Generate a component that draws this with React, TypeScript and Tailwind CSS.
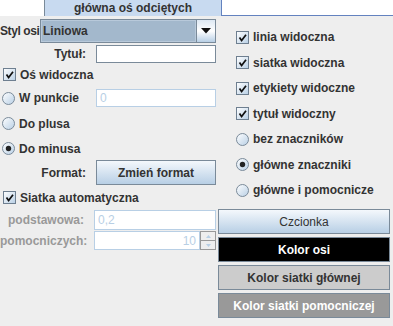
import { useId } from "react";

function CheckBox() {
  const id = useId();
  return (
    <svg width="13" height="13" viewBox="0 0 13 13" className="shrink-0">
      <defs>
        <linearGradient id={id} x1="0" y1="0" x2="1" y2="1">
          <stop offset="0" stopColor="#ffffff" />
          <stop offset="1" stopColor="#b8cfe5" />
        </linearGradient>
      </defs>
      <rect x="0.5" y="0.5" width="12" height="12" fill={`url(#${id})`} stroke="#6e7f90" />
      <path d="M3.5 6.5 L5.6 9.6 L10 3.8" stroke="#111" strokeWidth="1.7" fill="none" />
    </svg>
  );
}

function Radio({ on }: { on?: boolean }) {
  const id = useId();
  return (
    <svg width="13" height="13" viewBox="0 0 13 13" className="shrink-0">
      <defs>
        <linearGradient id={id} x1="0" y1="0" x2="1" y2="1">
          <stop offset="0" stopColor="#ffffff" />
          <stop offset="1" stopColor="#b8cfe5" />
        </linearGradient>
      </defs>
      <circle cx="6.5" cy="6.5" r="6" fill={`url(#${id})`} stroke="#7a8a99" />
      {on && <circle cx="6.5" cy="6.5" r="2.7" fill="#222" />}
    </svg>
  );
}

function Check({ label }: { label: string }) {
  return (
    <div className="flex items-center gap-[4px]">
      <CheckBox />
      <span>{label}</span>
    </div>
  );
}

function Opt({ label, on }: { label: string; on?: boolean }) {
  return (
    <div className="flex items-center gap-[4px]">
      <Radio on={on} />
      <span>{label}</span>
    </div>
  );
}

export default function App() {
  return (
    <div className="w-[393px] h-[326px] overflow-hidden bg-[#eeeeee] text-[12px] font-bold leading-[14px] text-[#333333] font-['Liberation_Sans',Arial,sans-serif]">
      {/* zakładki */}
      <div className="flex h-4">
        <div className="w-[45px] bg-white border-r border-[#7a8a99]" />
        <div className="w-[176px] bg-[#c8daf0] flex items-center justify-center">główna oś odciętych</div>
        <div className="flex-1 bg-white border-l border-b border-[#6382bf]" />
      </div>

      <div className="flex">
        {/* lewa kolumna */}
        <div className="w-[216px] flex flex-col">
          <div className="mt-[3px] h-[24px] flex items-center">
            <span className="w-[40px] shrink-0 whitespace-nowrap tracking-[-0.4px]">Styl osi</span>
            <div className="w-[176px] h-full flex border border-[#7a8a99]">
              <div className="flex-1 bg-[#a3b8cc] border border-[#b8c9da] flex items-center pl-[1px]">Liniowa</div>
              <div className="w-[19px] border-l border-[#7a8a99] bg-gradient-to-b from-[#dde8f3] via-white to-[#b8cfe5] flex items-center justify-center">
                <svg width="10" height="6" viewBox="0 0 10 6">
                  <path d="M0 0 H10 L5 5.5 Z" fill="#111" />
                </svg>
              </div>
            </div>
          </div>

          <div className="mt-[2px] h-[18px] flex items-center">
            <span className="w-[86px] text-right">Tytuł:</span>
            <div className="ml-[10px] w-[120px] h-full bg-white border border-[#7a8a99]" />
          </div>

          <div className="h-[23px] flex items-center pl-[3px]">
            <Check label="Oś widoczna" />
          </div>

          <div className="h-[24px] flex items-center">
            <div className="w-[96px] pl-[2px]">
              <Opt label="W punkcie" />
            </div>
            <div className="w-[120px] h-[18px] bg-white border border-[#b8cfe5] flex items-center pl-[3px] font-normal text-[#b8cfe5]">0</div>
          </div>

          <div className="h-[27px] flex items-center pl-[2px]">
            <Opt label="Do plusa" />
          </div>

          <div className="h-[23px] flex items-center pl-[2px]">
            <Opt label="Do minusa" on />
          </div>

          <div className="h-[25px] flex items-center">
            <span className="w-[86px] text-right">Format:</span>
            <div className="ml-[10px] w-[120px] h-full border border-[#7a8a99] bg-gradient-to-b from-[#f4f8fc] to-[#b8cfe5] flex items-center justify-center">
              Zmień format
            </div>
          </div>

          <div className="h-[25px] flex items-center pl-[3px]">
            <Check label="Siatka automatyczna" />
          </div>

          <div className="h-[20px] flex items-center">
            <span className="w-[84px] text-right text-[#999999] whitespace-nowrap">podstawowa:</span>
            <div className="ml-[10px] w-[122px] h-full bg-white border border-[#b8cfe5] flex items-center pl-[3px] font-normal text-[#b8cfe5]">0,2</div>
          </div>

          <div className="mt-[1px] h-[19px] flex items-center">
            <span className="w-[84px] text-right text-[#999999] whitespace-nowrap">pomocniczych:</span>
            <div className="ml-[10px] w-[106px] h-full bg-white border border-[#b8cfe5] flex items-center justify-end pr-[3px] font-normal text-[#b8cfe5]">10</div>
            <div className="w-[16px] h-full flex flex-col">
              <div className="flex-1 border border-[#999999] bg-[#eeeeee] flex items-center justify-center">
                <svg width="5" height="3" viewBox="0 0 5 3"><path d="M0 3 L2.5 0 L5 3 Z" fill="#b8cfe5" /></svg>
              </div>
              <div className="flex-1 border border-t-0 border-[#999999] bg-[#eeeeee] flex items-center justify-center">
                <svg width="5" height="3" viewBox="0 0 5 3"><path d="M0 0 L2.5 3 L5 0 Z" fill="#b8cfe5" /></svg>
              </div>
            </div>
          </div>
        </div>

        {/* prawa kolumna */}
        <div className="ml-[2px] w-[172px] flex flex-col pt-[8px]">
          <div className="h-[26px] flex items-center pl-[18px]"><Check label="linia widoczna" /></div>
          <div className="h-[25px] flex items-center pl-[18px]"><Check label="siatka widoczna" /></div>
          <div className="h-[26px] flex items-center pl-[18px]"><Check label="etykiety widoczne" /></div>
          <div className="h-[25px] flex items-center pl-[18px]"><Check label="tytuł widoczny" /></div>
          <div className="h-[26px] flex items-center pl-[18px]"><Opt label="bez znaczników" /></div>
          <div className="h-[25px] flex items-center pl-[18px]"><Opt label="główne znaczniki" on /></div>
          <div className="h-[26px] flex items-center pl-[18px]"><Opt label="główne i pomocnicze" /></div>

          <div className="mt-[6px] flex flex-col gap-[3px]">
            <div className="h-[25px] border border-[#7a8a99] bg-gradient-to-b from-[#f4f8fc] to-[#b8cfe5] flex items-center justify-center font-normal">
              Czcionka
            </div>
            <div className="h-[25px] border border-[#7a8a99] bg-black text-white flex items-center justify-center">Kolor osi</div>
            <div className="h-[25px] border border-[#7a8a99] bg-[#cccccc] flex items-center justify-center">Kolor siatki głównej</div>
            <div className="h-[25px] border border-[#7a8a99] bg-[#999999] text-white flex items-center justify-center">Kolor siatki pomocniczej</div>
          </div>
        </div>
      </div>
    </div>
  );
}
